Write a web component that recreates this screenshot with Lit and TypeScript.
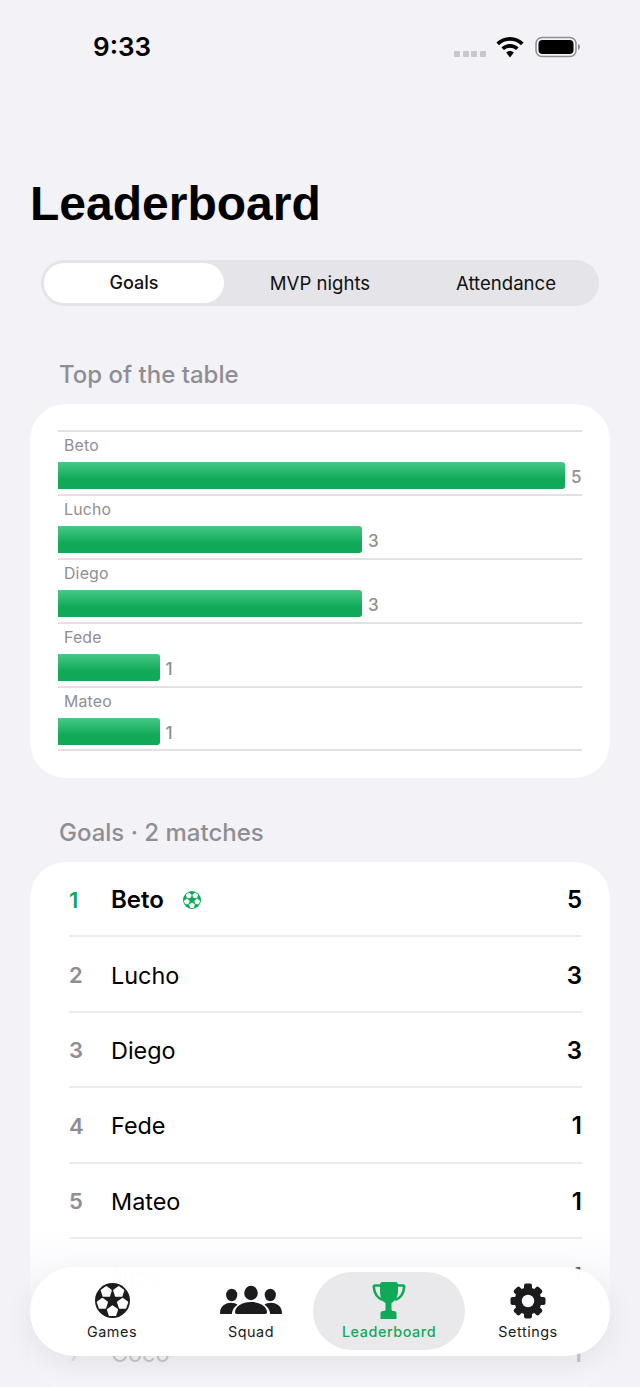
import { LitElement, html, css, svg } from "lit";
import { customElement } from "lit/decorators.js";

const bars = [
  { name: "Beto", v: 5, w: 507 },
  { name: "Lucho", v: 3, w: 304 },
  { name: "Diego", v: 3, w: 304 },
  { name: "Fede", v: 1, w: 101.5 },
  { name: "Mateo", v: 1, w: 101.5 },
];
const rows = [
  { n: 1, name: "Beto", v: 5 },
  { n: 2, name: "Lucho", v: 3 },
  { n: 3, name: "Diego", v: 3 },
  { n: 4, name: "Fede", v: 1 },
  { n: 5, name: "Mateo", v: 1 },
  { n: 6, name: "Nico", v: 1 },
  { n: 7, name: "Coco", v: 1 },
];

const pt = (cx: number, cy: number, r: number, deg: number) => {
  const a = (deg * Math.PI) / 180;
  return `${(cx + r * Math.cos(a)).toFixed(2)},${(cy + r * Math.sin(a)).toFixed(2)}`;
};
const patches = [-126, -54, 18, 90, 162].map((deg) => {
  const a = (deg * Math.PI) / 180;
  const cx = 17 + 10.3 * Math.cos(a);
  const cy = 17 + 10.3 * Math.sin(a);
  return [36, 108, 180, 252, 324].map((o) => pt(cx, cy, 4.9, deg + o)).join(" ");
});

const ball = (fg: string, size: number) => html`<svg width=${size} height=${size} viewBox="0 0 34 34">
  <circle cx="17" cy="17" r="17" fill=${fg}></circle>
  ${patches.map(
    (p) => svg`<polygon points=${p} fill="#fff" stroke="#fff" stroke-width="1.600" stroke-linejoin="round"></polygon>`
  )}
</svg>`;

const people = svg`<svg width="62" height="37" viewBox="0 0 62 37" fill="#1c1c1e">
  <ellipse cx="11.700" cy="13" rx="5.600" ry="6.200"></ellipse>
  <ellipse cx="31" cy="11" rx="6.800" ry="7.200"></ellipse>
  <ellipse cx="50.300" cy="13" rx="5.600" ry="6.200"></ellipse>
  <path d="M0 31c0-6 4.800-10.200 11-10.200 2.500 0 4.800.7 6.500 1.900-3.200 2-5.200 5-5.700 9.300H1c-.7 0-1-.3-1-1z"></path>
  <path d="M62 31c0-6-4.800-10.200-11-10.200-2.500 0-4.800.7-6.500 1.900 3.200 2 5.200 5 5.700 9.300H61c.7 0 1-.3 1-1z"></path>
  <path d="M17 32c-1.400 0-2-.6-2-1.700 0-5.900 7-10.300 16-10.300s16 4.400 16 10.300c0 1.100-.6 1.700-2 1.700z"></path>
</svg>`;

const trophy = svg`<svg width="34" height="37" viewBox="0 0 34 37">
  <path d="M9 3.500H3.200c-1 0-1.500.6-1.400 1.500.5 6.500 3.700 11 9 13M25 3.500h5.800c1 0 1.500.6 1.400 1.500-.5 6.500-3.700 11-9 13" fill="none" stroke="#0fa958" stroke-width="2.600"></path>
  <path fill="#0fa958" d="M8 2.500C8 1 9 0 10.500 0h13C25 0 26 1 26 2.500V9c0 6-3 10-6.500 12v6.500c0 .8.500 1.300 1.300 1.500h1.200c1.600 0 2.500 1 2.500 2.500V37H8.500v-5.500C8.500 30 9.400 29 11 29h1.200c.8-.2 1.300-.7 1.300-1.500V21C10 19 8 15 8 9z"></path>
</svg>`;

const gear = svg`<svg width="36" height="36" viewBox="0 0 36 36" fill="#1c1c1e">
  <circle cx="18" cy="18" r="13.500"></circle>
  ${[0, 45, 90, 135, 180, 225, 270, 315].map(
    (d) => svg`<rect x="14" y="0.500" width="8" height="9" rx="2" transform="rotate(${d} 18 18)"></rect>`
  )}
  <circle cx="18" cy="18" r="6.200" fill="#fff"></circle>
</svg>`;

@customElement("app-root")
export class AppRoot extends LitElement {
  static styles = css`
    :host {
      display: block;
      position: relative;
      width: 640px;
      height: 1387px;
      overflow: hidden;
      background: #f2f2f7;
      font-family: Inter, "Liberation Sans", sans-serif;
      color: #000;
    }
    .status {
      height: 94px;
      display: flex;
      justify-content: space-between;
      padding: 0 59px 0 93px;
    }
    .time {
      font-size: 26px;
      font-weight: 600;
      line-height: 32px;
      margin-top: 31px;
    }
    .sys {
      display: flex;
      align-items: center;
      height: 24px;
      margin-top: 35px;
    }
    .dots { display: flex; gap: 2.670px; margin: 13px 10px 0 0; }
    .dots i { width: 6px; height: 6px; border-radius: 1px; background: #c7c7cc; }
    .wifi { margin-right: 11px; }
    h1 {
      margin: 82px 0 0;
      padding: 0 30px;
      font: 700 48px/56px "Liberation Sans", sans-serif;
      height: 56px;
    }
    .seg {
      margin: 28px 41px 0;
      height: 45.500px;
      box-sizing: border-box;
      border-radius: 23px;
      background: #e4e4e9;
      padding: 3px;
      display: grid;
      grid-template-columns: 180px 1fr 1fr;
      font-size: 18.600px;
      color: #111;
    }
    .seg div { display: flex; align-items: center; justify-content: center; border-radius: 20px; padding-left: 6px; }
    .seg .on { background: #fff; font-weight: 500; font-size: 18px; padding-left: 0; }
    .h {
      margin: 0;
      padding: 0 59px;
      font-size: 24px;
      font-weight: 500;
      line-height: 30px;
      color: #8e8e93;
    }
    .h1 { margin-top: 54.500px; }
    .h2 { margin-top: 40.500px; }
    .card {
      margin: 14px 30px 0;
      background: #fff;
      border-radius: 36px;
    }
    .chart { padding: 26px 28px; height: 373.500px; box-sizing: border-box; }
    .barrow {
      height: 64px;
      box-sizing: border-box;
      border-top: 2px solid #e2e2e6;
    }
    .barrow:last-child { border-bottom: 2px solid #e2e2e6; height: 65px; }
    .bname { font-size: 15.800px; letter-spacing: 0.2px; line-height: 20px; color: #8e8e93; padding: 3.500px 0 0 6px; height: 27px; box-sizing: border-box; }
    .track { display: flex; align-items: center; gap: 6px; height: 27px; margin-top: 3px; }
    .bar {
      height: 27px;
      border-radius: 0 3px 3px 0;
      background: linear-gradient(#46c985, #0fa958 65%);
    }
    .track span { font-size: 17px; font-weight: 500; color: #8e8e93; margin-top: 2px; }
    .list { padding: 0 28px 0 39px; margin-top: 14px; }
    .row {
      height: 75.400px;
      box-sizing: border-box;
      padding-top: 2px;
      display: flex;
      align-items: center;
      border-bottom: 2px solid #ececf0;
      font-size: 23.400px;
    }
    .row:last-child { border-bottom: 0; }
    .num { width: 42px; font-size: 22px; font-weight: 600; color: #8e8e93; }
    .first .num { color: #0fa958; }
    .name { flex: 1; display: flex; align-items: center; gap: 19px; }
    .first .name { font-weight: 600; font-size: 24px; }
    .val { font-weight: 600; font-size: 24px; }
    .fade {
      position: absolute;
      left: 0; right: 0; bottom: 0;
      height: 160px;
      background: linear-gradient(rgba(242,242,247,0), rgba(242,242,247,.85) 55%, #f2f2f7cc);
    }
    nav {
      position: absolute;
      left: 30px;
      top: 1267px;
      width: 580px;
      height: 89px;
      box-sizing: border-box;
      border-radius: 45px;
      background: rgba(255,255,255,.985);
      box-shadow: 0 10px 30px rgba(0,0,0,.07);
      padding: 5px 19px 6px 5px;
      display: grid;
      grid-template-columns: 154px 124px 152px 126px;
    }
    nav a {
      display: flex;
      flex-direction: column;
      align-items: center;
      border-radius: 39px;
      padding-top: 10px;
      font-size: 14.400px;
      line-height: 18px;
      font-weight: 400;
      letter-spacing: 0.55px;
      color: #1c1c1e;
    }
    nav .ic { height: 37px; display: flex; align-items: center; justify-content: center; margin-bottom: 4px; }
    nav a.on { background: #e9e9eb; color: #0fa958; font-weight: 500; letter-spacing: 0.55px; }
  `;

  render() {
    return html`
      <div class="status">
        <div class="time">9:33</div>
        <div class="sys">
          <div class="dots"><i></i><i></i><i></i><i></i></div>
          <svg class="wifi" width="28" height="21" viewBox="0 0 28 21">
            <path d="M14 0c5.300 0 10 2.100 13.600 5.500L25 8.200A16 16 0 0 0 14 3.800 16 16 0 0 0 3 8.200L.4 5.500C4 2.100 8.700 0 14 0z"></path>
            <path d="M14 7c3.300 0 6.300 1.300 8.600 3.400L20 13.100a9 9 0 0 0-6-2.400 9 9 0 0 0-6 2.400l-2.600-2.700C7.700 8.300 10.700 7 14 7z"></path>
            <path d="M14 14c1.500 0 2.800.6 3.800 1.500L14 20.500l-3.800-5C11.200 14.600 12.500 14 14 14z"></path>
          </svg>
          <svg width="46" height="22" viewBox="0 0 46 22">
            <rect x="1" y="1.500" width="40" height="19" rx="6" fill="none" stroke="#8e8e93" stroke-width="1.500"></rect>
            <rect x="3.500" y="4" width="35" height="14" rx="4"></rect>
            <path d="M43 8v6c1.200-.4 2-1.600 2-3s-.8-2.600-2-3z" fill="#8e8e93"></path>
          </svg>
        </div>
      </div>
      <h1>Leaderboard</h1>
      <div class="seg">
        <div class="on">Goals</div><div>MVP nights</div><div>Attendance</div>
      </div>
      <p class="h h1">Top of the table</p>
      <div class="card chart">
        ${bars.map(b => html`<div class="barrow">
          <div class="bname">${b.name}</div>
          <div class="track"><div class="bar" style="width:${b.w}px"></div><span>${b.v}</span></div>
        </div>`)}
      </div>
      <p class="h h2">Goals · 2 matches</p>
      <div class="card list">
        ${rows.map(r => html`<div class="row ${r.n === 1 ? "first" : ""}">
          <div class="num">${r.n}</div>
          <div class="name">${r.name}${r.n === 1 ? ball("#0fa958", 18) : ""}</div>
          <div class="val">${r.v}</div>
        </div>`)}
      </div>
      <div class="fade"></div>
      <nav>
        <a><div class="ic">${ball("#1c1c1e", 35)}</div>Games</a>
        <a><div class="ic">${people}</div>Squad</a>
        <a class="on"><div class="ic">${trophy}</div>Leaderboard</a>
        <a><div class="ic">${gear}</div>Settings</a>
      </nav>
    `;
  }
}
